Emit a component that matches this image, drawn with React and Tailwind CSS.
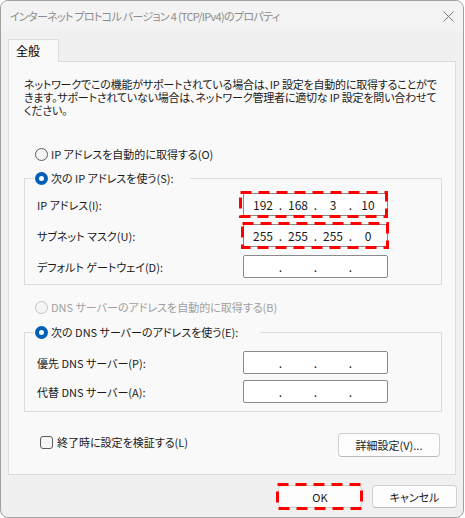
import React from 'react'

// red dashed annotation drawn over a control
function RedBox({ w, h, className }) {
  return (
    <svg width={w} height={h} className={'absolute pointer-events-none ' + className}>
      <rect
        x="1.5"
        y="1.5"
        width={w - 3}
        height={h - 3}
        fill="none"
        stroke="#ff0000"
        strokeWidth="3"
        strokeDasharray="11 7"
      />
    </svg>
  )
}

function Radio({ checked, disabled }) {
  if (checked) {
    return (
      <span className="w-[13px] h-[13px] rounded-full bg-[#005fb8] flex items-center justify-center shrink-0">
        <span className="w-[5px] h-[5px] rounded-full bg-white"></span>
      </span>
    )
  }
  return (
    <span
      className={
        disabled
          ? 'w-[13px] h-[13px] rounded-full border border-[#c4c4c4] bg-[#f5f5f5] shrink-0'
          : 'w-[13px] h-[13px] rounded-full border border-[#5c5c5c] bg-[#f5f5f5] shrink-0'
      }
    ></span>
  )
}

function IpInput({ values = ['', '', '', ''], box }) {
  return (
    <div className="relative">
      <div className="flex items-center w-[145px] h-[23px] bg-white border border-[#8a8a8a] rounded-[2px] pl-[4px] text-[12px] text-[#1a1a1a]">
        {values.map((v, i) => (
          <React.Fragment key={i}>
            {i > 0 && <span className="w-[5px] text-center">.</span>}
            <span className="w-[30px] text-center">{v}</span>
          </React.Fragment>
        ))}
      </div>
      {box === 1 && <RedBox w={149} h={27} className="-left-[4px] -top-[2px]" />}
      {box === 2 && <RedBox w={148} h={27} className="-left-[2px] -top-[2px]" />}
    </div>
  )
}

function Row({ label, children }) {
  return (
    <div className="flex items-center">
      <span className="w-[206px]">{label}</span>
      {children}
    </div>
  )
}

export default function App() {
  return (
    <div className="w-[465px] h-[518px] bg-white font-['Noto_Sans_CJK_JP',sans-serif] [font-feature-settings:'palt'] text-[11px] leading-[16px] text-[#1a1a1a]">
      <div className="w-[464px] h-[518px] rounded-[8px] border border-[#a0a0a0] bg-[#f0f0f0] flex flex-col overflow-hidden">
        {/* title bar */}
        <div className="h-[30px] bg-[#f3f3f3] flex items-center justify-between pl-[9px] pr-[8px] shrink-0">
          <span className="text-[#8c8c8c] tracking-[-0.7px]">インターネット プロトコル バージョン 4 (TCP/IPv4)のプロパティ</span>
          <svg width="11" height="11" viewBox="0 0 11 11" className="mr-[1px]">
            <path d="M0.5 0.5 L10.5 10.5 M10.5 0.5 L0.5 10.5" stroke="#7a7a7a" strokeWidth="1" />
          </svg>
        </div>

        <div className="px-[7px] pt-[8px]">
          {/* tab */}
          <div className="relative z-10 -mb-[1px] w-[51px] h-[23px] bg-[#f9f9f9] border border-b-0 border-[#dcdcdc] pl-[7px] pt-[3px] text-[12px] text-black">
            全般
          </div>

          {/* tab panel */}
          <div className="h-[414px] bg-[#f9f9f9] border border-[#dcdcdc] pl-[15px] pr-[13px] pt-[16px]">
            <div className="leading-[13px] whitespace-nowrap tracking-[-0.2px]">
              <div>ネットワークでこの機能がサポートされている場合は、IP 設定を自動的に取得することがで</div>
              <div>きます。サポートされていない場合は、ネットワーク管理者に適切な IP 設定を問い合わせて</div>
              <div>ください。</div>
            </div>

            <div className="mt-[29px] h-[16px] flex items-center gap-[3px] pl-[11px]">
              <Radio />
              <span>IP アドレスを自動的に取得する(O)</span>
            </div>

            <fieldset className="mt-[8px] w-[418px] border border-[#dcdcdc] pl-[12px] pb-[6px]">
              <legend className="ml-[-3px] w-[156px] h-[16px] flex items-center gap-[3px] pl-[1px]">
                <Radio checked />
                <span>次の IP アドレスを使う(S):</span>
              </legend>
              <div className="pt-[7px] flex flex-col gap-[8px]">
                <Row label="IP アドレス(I):">
                  <IpInput values={['192', '168', '3', '10']} box={1} />
                </Row>
                <Row label="サブネット マスク(U):">
                  <IpInput values={['255', '255', '255', '0']} box={2} />
                </Row>
                <Row label="デフォルト ゲートウェイ(D):">
                  <IpInput />
                </Row>
              </div>
            </fieldset>

            <div className="mt-[14px] h-[16px] flex items-center gap-[3px] pl-[11px] text-[#a0a0a0]">
              <Radio disabled />
              <span>DNS サーバーのアドレスを自動的に取得する(B)</span>
            </div>

            <fieldset className="mt-[9px] w-[418px] border border-[#dcdcdc] pl-[12px] pb-[8px]">
              <legend className="ml-[-3px] w-[226px] h-[16px] flex items-center gap-[3px] pl-[1px]">
                <Radio checked />
                <span>次の DNS サーバーのアドレスを使う(E):</span>
              </legend>
              <div className="pt-[11px] flex flex-col gap-[6px]">
                <Row label="優先 DNS サーバー(P):">
                  <IpInput />
                </Row>
                <Row label="代替 DNS サーバー(A):">
                  <IpInput />
                </Row>
              </div>
            </fieldset>

            <div className="mt-[21px] flex items-start justify-between w-[418px] pl-[16px] pr-[2px]">
              <div className="flex items-center gap-[4px] mt-[1px]">
                <span className="w-[13px] h-[13px] rounded-[3px] border border-[#5c5c5c] bg-[#f5f5f5]"></span>
                <span>終了時に設定を検証する(L)</span>
              </div>
              <button className="w-[102px] h-[24px] rounded-[4px] border border-[#d0d0d0] border-b-[#bcbcbc] bg-[#fdfdfd] text-[#1a1a1a]">
                詳細設定(V)...
              </button>
            </div>
          </div>
        </div>

        {/* dialog buttons */}
        <div className="mt-[10px] flex justify-end gap-[10px] pr-[6px]">
          <div className="relative">
            <button className="w-[84px] h-[23px] rounded-[4px] border border-[#d0d0d0] bg-[#fdfdfd] text-[#1a1a1a]">
              OK
            </button>
            <RedBox w={87} h={27} className="-left-[2px] -top-[2px]" />
          </div>
          <button className="w-[85px] h-[23px] rounded-[4px] border border-[#d0d0d0] border-b-[#bcbcbc] bg-[#fdfdfd] text-[#1a1a1a]">
            キャンセル
          </button>
        </div>
      </div>
    </div>
  )
}
